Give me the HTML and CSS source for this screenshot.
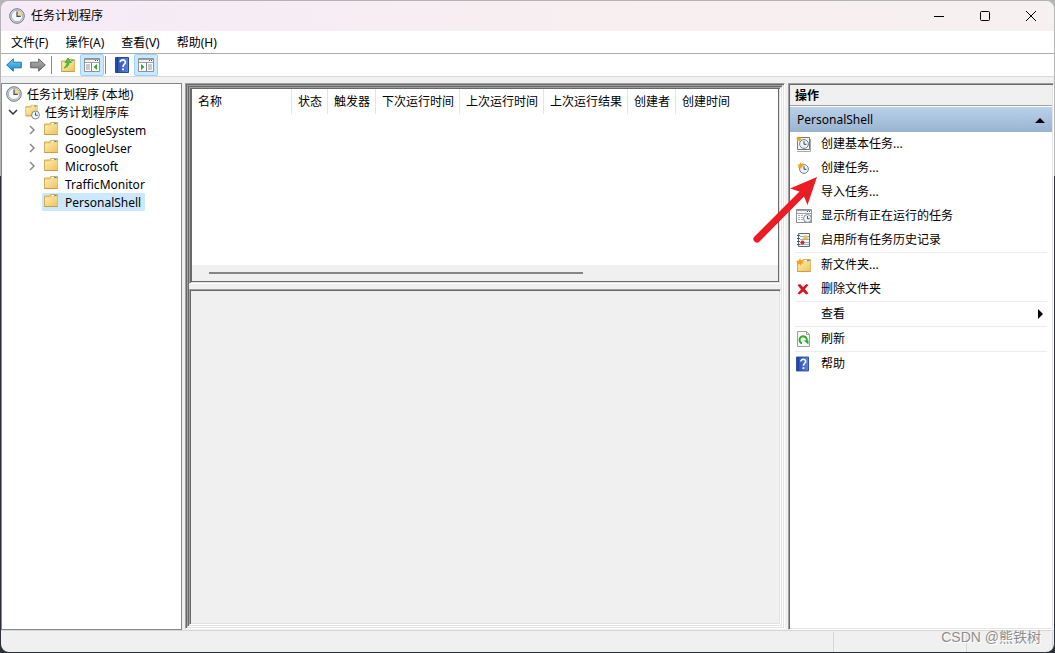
FILE: index.html
```html
<!DOCTYPE html>
<html lang="zh-CN">
<head>
<meta charset="utf-8">
<title>任务计划程序</title>
<link rel="stylesheet" href="styles.css">
</head>
<body>
<svg class="defs" aria-hidden="true">
  <defs>
    <linearGradient id="gold" x1="0" y1="0" x2="1" y2="1"><stop offset="0" stop-color="#fdeeb0"/><stop offset="1" stop-color="#eec35f"/></linearGradient>
    <linearGradient id="blue" x1="0" y1="0" x2="0" y2="1"><stop offset="0" stop-color="#7fd0f5"/><stop offset="1" stop-color="#1483cf"/></linearGradient>
    <linearGradient id="gray" x1="0" y1="0" x2="0" y2="1"><stop offset="0" stop-color="#b5b5b5"/><stop offset="1" stop-color="#777"/></linearGradient>
    <linearGradient id="navy" x1="0" y1="0" x2="1" y2="0"><stop offset="0" stop-color="#2549ad"/><stop offset="1" stop-color="#5c83e0"/></linearGradient>
    <symbol id="clock" viewBox="0 0 16 16">
      <circle cx="8" cy="8" r="7.3" fill="#d3d8dd" stroke="#727a82"/>
      <circle cx="8" cy="8" r="5.6" fill="#f4f8fb" stroke="#929da8" stroke-width=".7"/>
      <path d="M8 8V2.8A5.2 5.2 0 0 1 13.2 8z" fill="#f5d58d"/>
      <path d="M8 3.5V8.4H11.8" fill="none" stroke="#414e5c" stroke-width="1.2"/>
    </symbol>
    <symbol id="folder" viewBox="0 0 16 16">
      <path d="M1.500 3H6.500L7.500 1.500H14.500V13.500H1.500z" fill="#efcb78" stroke="#d6ae5a"/>
      <path d="M8.500 2.500H11" stroke="#fff"/><path d="M11 2.500H13.500" stroke="#3d9ae0"/>
      <path d="M2 4.500H7.500L8.500 3.500H14.500V13H2z" fill="url(#gold)"/>
      <path d="M1.500 13.500H14.500" stroke="#c99c46"/>
    </symbol>
    <symbol id="miniclock" viewBox="0 0 10 10">
      <circle cx="5" cy="5" r="4.4" fill="#eef5fa" stroke="#70808f"/>
      <path d="M5 2.2V5.3H7.5" fill="none" stroke="#34475a"/>
    </symbol>
    <symbol id="star" viewBox="0 0 10 10">
      <path d="M5 0L6.2 3 9.4 1.6 7.6 4.7 10 6.8 6.8 6.9 6.2 10 4.2 7.5 1 9 2.3 5.8 0 3.6 3.5 3.4z" fill="#f8a01c"/>
    </symbol>
    <symbol id="help" viewBox="0 0 14 16">
      <path d="M.5.5H13.5V15.5H.5z" fill="url(#navy)" stroke="#2447a5"/>
      <path d="M2.5 1V15" stroke="#1b3c96"/>
      <path d="M5.2 5.2C5.2 2.2 10.6 2.2 10.4 5.3C10.3 7.3 8 7.3 8 10" fill="none" stroke="#fff" stroke-width="1.7"/>
      <path d="M7 11.5H9V13.3H7z" fill="#fff"/>
    </symbol>
    <symbol id="pane" viewBox="0 0 16 14">
      <path d="M.5.5H15.5V13.5H.5z" fill="#fff" stroke="#8b9298"/>
      <path d="M1 1.5H15M1 4.5H15" stroke="#9ba2a8"/><path d="M1 3H11" stroke="#dfe3e6"/>
      <path d="M11 2.5H12M13 2.5H14" stroke="#495057"/>
    </symbol>
  </defs>
</svg>

<div class="window">
  <header class="titlebar">
    <svg class="app-icon"><use href="#clock"/></svg>
    <h1 class="title">任务计划程序</h1>
    <div class="caption-buttons">
      <button class="caption" aria-label="最小化"><svg class="glyph" viewBox="0 0 12 12"><path d="M1 6.5H11"/></svg></button>
      <button class="caption" aria-label="最大化"><svg class="glyph" viewBox="0 0 12 12"><rect x="1.5" y="1.5" width="9" height="9" rx="1"/></svg></button>
      <button class="caption" aria-label="关闭"><svg class="glyph" viewBox="0 0 12 12"><path d="M1 1L11 11M11 1L1 11"/></svg></button>
    </div>
  </header>

  <nav class="menubar">
    <button class="menu">文件(F)</button>
    <button class="menu">操作(A)</button>
    <button class="menu">查看(V)</button>
    <button class="menu">帮助(H)</button>
  </nav>

  <div class="toolbar">
    <button class="tool" aria-label="后退"><svg class="icon" viewBox="0 0 16 16"><path d="M.7 8L7.3 1.8V5.2H15.3V10.8H7.3V14.2z" fill="url(#blue)" stroke="#1a78b8"/></svg></button>
    <button class="tool" aria-label="前进"><svg class="icon" viewBox="0 0 16 16"><path d="M15.3 8L8.7 1.8V5.2H.7V10.8H8.7V14.2z" fill="url(#gray)" stroke="#666"/></svg></button>
    <span class="divider"></span>
    <button class="tool" aria-label="上移"><svg class="icon" viewBox="0 0 16 16"><use href="#folder" y="1" width="16" height="16"/><path d="M4 11C8 10 9 8 9 5.5H11.500L8 1 5 5.500H7C7 7.500 6 9 4 11z" fill="#4fc62e" stroke="#2a9a18" stroke-width=".6"/></svg></button>
    <button class="tool pressed" aria-label="显示控制台树"><svg class="icon" viewBox="0 0 16 16"><use href="#pane" y="1" width="16" height="14"/><path d="M7.500 6V14" stroke="#7b8287"/><path d="M2 8H6M2 10H6M2 12H6" stroke="#8f969b"/><path d="M13 7V13L9.500 10z" fill="#2fae24"/></svg></button>
    <span class="divider"></span>
    <button class="tool" aria-label="帮助"><svg class="icon" viewBox="0 0 16 16"><use href="#help" x="1" width="14" height="16"/></svg></button>
    <button class="tool pressed" aria-label="显示操作窗格"><svg class="icon" viewBox="0 0 16 16"><use href="#pane" y="1" width="16" height="14"/><path d="M8.500 6V14" stroke="#7b8287"/><path d="M10 8H14M10 10H14M10 12H14" stroke="#8f969b"/><path d="M3 7V13L6.500 10z" fill="#2fae24"/></svg></button>
  </div>

  <main class="workspace">
    <section class="tree" role="tree" aria-label="控制台树">
      <div class="node root" role="treeitem"><svg class="icon"><use href="#clock"/></svg><span class="label">任务计划程序 (本地)</span></div>
      <div class="node library" role="treeitem"><svg class="chevron open" viewBox="0 0 10 10"><path d="M1 3L5 7 9 3"/></svg><svg class="icon" viewBox="0 0 16 16"><use href="#folder" width="15" height="14"/><use href="#miniclock" x="7" y="6" width="9" height="10"/></svg><span class="label">任务计划程序库</span></div>
      <div class="node" role="treeitem"><svg class="chevron" viewBox="0 0 10 10"><path d="M3 1L7 5 3 9"/></svg><svg class="icon raised"><use href="#folder"/></svg><span class="label">GoogleSystem</span></div>
      <div class="node" role="treeitem"><svg class="chevron" viewBox="0 0 10 10"><path d="M3 1L7 5 3 9"/></svg><svg class="icon raised"><use href="#folder"/></svg><span class="label">GoogleUser</span></div>
      <div class="node" role="treeitem"><svg class="chevron" viewBox="0 0 10 10"><path d="M3 1L7 5 3 9"/></svg><svg class="icon raised"><use href="#folder"/></svg><span class="label">Microsoft</span></div>
      <div class="node leaf" role="treeitem"><svg class="icon raised"><use href="#folder"/></svg><span class="label">TrafficMonitor</span></div>
      <div class="node selected" role="treeitem"><svg class="icon raised"><use href="#folder"/></svg><span class="label">PersonalShell</span></div>
    </section>

    <section class="bevel frame">
      <div class="bevel split">
        <div class="bevel pane-top">
          <div class="list">
            <table class="tasks">
              <colgroup><col class="w-name"><col class="w-two"><col class="w-three"><col class="w-six"><col class="w-six"><col class="w-six"><col class="w-three"><col></colgroup>
              <thead><tr><th>名称</th><th>状态</th><th>触发器</th><th>下次运行时间</th><th>上次运行时间</th><th>上次运行结果</th><th>创建者</th><th>创建时间</th></tr></thead>
            </table>
            <div class="scroll"><div class="thumb"></div></div>
          </div>
        </div>
        <div class="bevel pane-bottom"></div>
      </div>
    </section>

    <aside class="bevel actions">
      <h2 class="actions-title">操作</h2>
      <button class="group"><span>PersonalShell</span><svg class="marker" viewBox="0 0 10 10"><path d="M0 8H10L5 3z"/></svg></button>
      <ul class="action-list">
        <li><button class="action"><svg class="icon" viewBox="0 0 16 16"><path d="M1.500 1.500H13.500V13.500H1.500z" fill="#f3f3f3" stroke="#777"/><path d="M1 15.500H14.500V3" fill="none" stroke="#aaa"/><use href="#miniclock" x="3" y="3" width="10" height="10"/><use href="#star" width="6" height="6"/></svg><span>创建基本任务...</span></button></li>
        <li><button class="action"><svg class="icon" viewBox="0 0 16 16"><use href="#miniclock" x="3" y="4" width="10" height="10"/><use href="#star" x="1" y="2" width="7" height="7"/></svg><span>创建任务...</span></button></li>
        <li><button class="action"><span class="icon"></span><span>导入任务...</span></button></li>
        <li><button class="action"><svg class="icon" viewBox="0 0 16 16"><use href="#pane" y="1" width="16" height="14"/><path d="M2 7.500H8M2 9.500H7M2 11.500H7" stroke="#aab1b7" stroke-dasharray="2 1"/><use href="#miniclock" x="7" y="6" width="9" height="9"/></svg><span>显示所有正在运行的任务</span></button></li>
        <li><button class="action"><svg class="icon" viewBox="0 0 16 16"><path d="M2.500 1.500H13.500V14.500H2.500z" fill="#f5f8fc" stroke="#596b80"/><path d="M4 4.500H13M4 7.500H13M4 10.500H13M4 12.500H13" stroke="#9db0c6"/><path d="M1 3.500H4M1 6.500H4M1 9.500H4M1 12.500H4" stroke="#4b5a6b"/><path d="M9.500 2.500L12.500 7H6.500z" fill="#f7c91c"/><circle cx="6.500" cy="10.500" r="2" fill="#d92b25"/></svg><span>启用所有任务历史记录</span></button></li>
        <li class="ruled"><button class="action"><svg class="icon" viewBox="0 0 16 16"><use href="#folder" y="1" width="16" height="16"/><use href="#star" y="1" width="8" height="8"/></svg><span>新文件夹...</span></button></li>
        <li><button class="action"><svg class="icon" viewBox="0 0 16 16"><path d="M1.500 4L4 3 7 6 10.500 3 12.500 4 9 8 12.500 12.500 10 13.500 7 10.500 3.500 13.500 1.500 12.500 5 8.500z" fill="#d3171d"/></svg><span>删除文件夹</span></button></li>
        <li class="ruled"><button class="action"><span class="icon"></span><span>查看</span><svg class="marker" viewBox="0 0 10 10"><path d="M3 0V10L8 5z"/></svg></button></li>
        <li class="ruled"><button class="action"><svg class="icon" viewBox="0 0 16 16"><path d="M1.500.5H10.500L13.500 3.500V15.500H1.500z" fill="#f7f7f7" stroke="#a2a2a2"/><path d="M10.500.5V3.500H13.500" fill="none" stroke="#a2a2a2"/><path d="M6 12.300A3.600 3.600 0 1 1 10.600 10" fill="none" stroke="#2bae28" stroke-width="2"/><path d="M7.500 9.500H12.500V13.500z" fill="#2bae28"/></svg><span>刷新</span></button></li>
        <li class="ruled"><button class="action"><svg class="icon" viewBox="0 0 16 16"><use href="#help" width="13" height="16"/></svg><span>帮助</span></button></li>
      </ul>
      <svg class="pointer" viewBox="0 0 72 72" aria-hidden="true"><path d="M67 3L40 14.500 49.500 17.500 4.500 62.500A3.500 3.500 0 0 0 9.500 67.500L54 22.500 57.500 31z" fill="#ec1c24"/></svg>
    </aside>
  </main>

  <footer class="statusbar"><span class="cell main"></span><span class="cell middle"></span><span class="cell last"></span></footer>
  <div class="watermark">CSDN @熊铁树</div>
</div>
</body>
</html>
```
FILE: styles.css
```css
* { box-sizing: border-box; }

html, body { height: 100%; }

body {
  margin: 0;
  background: linear-gradient(#b4b4b6 0, #b4b4b6 27%, #2c303b 27%);
  color: #000;
  font-family: "Noto Sans", "Noto Sans CJK SC", sans-serif;
  font-size: 12px;
  line-height: 18px;
}

button {
  margin: 0;
  padding: 0;
  border: 0;
  background: none;
  color: inherit;
  font: inherit;
}

.defs { position: absolute; width: 0; height: 0; }

.window {
  position: relative;
  display: flex;
  flex-direction: column;
  height: 100vh;
  border: 1px solid transparent;
  border-radius: 9px;
  background: #f0f0f0 padding-box;
  overflow: hidden;
}

.icon { display: block; flex: none; width: 16px; height: 16px; }

/* Title bar */
.titlebar {
  display: flex;
  align-items: center;
  height: 30px;
  padding-left: 8px;
  background: linear-gradient(90deg, #f6eaf7, #f8eff0 60%, #f6f0f0);
}
.app-icon { width: 16px; height: 16px; }
.title { flex: 1; margin: 0 0 0 6px; font-size: 12px; font-weight: 400; }
.caption-buttons { display: flex; }
.caption { display: grid; place-items: center; width: 46px; height: 30px; }
.glyph { width: 12px; height: 12px; fill: none; stroke: #000; }

/* Menu and toolbar */
.menubar {
  display: flex;
  gap: 1px;
  height: 23px;
  padding: 1px 0 0 2px;
  border-bottom: 1px solid #abadb6;
  background: #fff;
}
.menu { padding: 0 8px; }
.toolbar {
  display: flex;
  align-items: center;
  height: 23px;
  padding-left: 1px;
  border-bottom: 1px solid #d9d9d9;
  background: #fff;
}
.tool { display: grid; place-items: center; width: 24px; height: 22px; }
.tool.pressed { border: 1px solid #99d1ff; border-radius: 2px; background: #cce8ff; }
.divider { width: 1px; height: 18px; margin: 0 4px 0 1px; background: #8a8a8a; }

/* Work area */
.workspace {
  display: grid;
  grid-template-columns: 181px minmax(0, 1fr) 266px;
  column-gap: 3px;
  flex: 1;
  min-height: 0;
  padding-top: 6px;
}

.tree {
  padding: 1px 0 0 4px;
  border: 1px solid #828790;
  background: #fff;
}
.node { display: flex; align-items: center; height: 18px; padding-left: 21px; white-space: nowrap; }
.node.root { padding-left: 0; }
.node.library { padding-left: 2px; }
.node.root .label, .node.library .label { padding-left: 5px; }
.node.leaf { padding-left: 37px; }
.chevron { width: 10px; height: 10px; margin-right: 6px; fill: none; stroke: #8a8a8a; stroke-width: 1.5; }
.chevron.open { stroke: #333; }
.raised { align-self: flex-start; }
.label { padding: 1px 0 0 6px; }
.node.selected {
  width: max-content;
  margin-left: 36px;
  padding: 0 4px 0 1px;
  border-radius: 1px;
  background: #cce8ff;
}

/* Sunken double edge */
.bevel {
  border: 1px solid;
  border-color: #a0a0a0 #fff #fff #a0a0a0;
  box-shadow: inset 1px 1px #696969, inset -1px -1px #e3e3e3;
  padding: 1px;
}
.frame { display: flex; min-width: 0; margin-bottom: 1px; }
.split { display: flex; flex: 1; flex-direction: column; gap: 5px; min-width: 0; }
.pane-top { flex: 0 0 197px; }
.pane-bottom { flex: 1; }

.list {
  display: flex;
  flex-direction: column;
  height: 100%;
  border: 1px solid #696969;
  border-top: 0;
  background: #fff;
}
.tasks { width: 100%; table-layout: fixed; border-collapse: collapse; }
.w-name { width: 100px; }
.w-two { width: 36px; }
.w-three { width: 48px; }
.w-six { width: 84px; }
th {
  height: 25px;
  padding: 0 0 0 6px;
  font-weight: 400;
  text-align: left;
  white-space: nowrap;
  box-shadow: inset -1px 0 #e5e5e5;
}
th:last-child { box-shadow: none; }
.scroll { margin-top: auto; padding: 7px 195px 7px 17px; background: #f0f0f0; }
.thumb { height: 2px; background: #868686; }

/* Actions pane */
.actions { position: relative; background: #fff; }
.actions-title {
  height: 21px;
  margin: 0 0 1px;
  padding: 2px 5px 0;
  border-bottom: 1px solid #a0a0a0;
  background: #f0f0f0;
  font-size: 12px;
  font-weight: 700;
}
.group {
  display: flex;
  align-items: center;
  justify-content: space-between;
  width: 100%;
  height: 25px;
  padding: 0 7px;
  background: linear-gradient(#b9d1ea, #99b4d1);
}
.marker { width: 10px; height: 10px; }
.action-list { margin: 0; padding: 0 5px; list-style: none; }
.ruled { border-top: 1px solid #ececec; }
.action { display: flex; align-items: center; width: 100%; height: 24px; gap: 9px; padding: 0 2px 0 1px; text-align: left; }
.action .marker { margin-left: auto; }
.pointer { position: absolute; left: -39px; top: 90px; width: 72px; height: 72px; }

/* Status bar */
.statusbar { display: flex; height: 22px; padding-top: 1px; border-top: 1px solid #d7d7d7; }
.cell { border-right: 1px solid #d7d7d7; }
.main { flex: 1; }
.middle { width: 133px; }
.last { width: 86px; margin-right: 1px; }

.watermark {
  position: absolute;
  right: 13px;
  bottom: 6px;
  color: #8e8e8e;
  font-family: "Liberation Sans", "Noto Sans CJK SC", sans-serif;
  font-size: 14px;
  text-shadow: 1px 1px #fff;
}
```
